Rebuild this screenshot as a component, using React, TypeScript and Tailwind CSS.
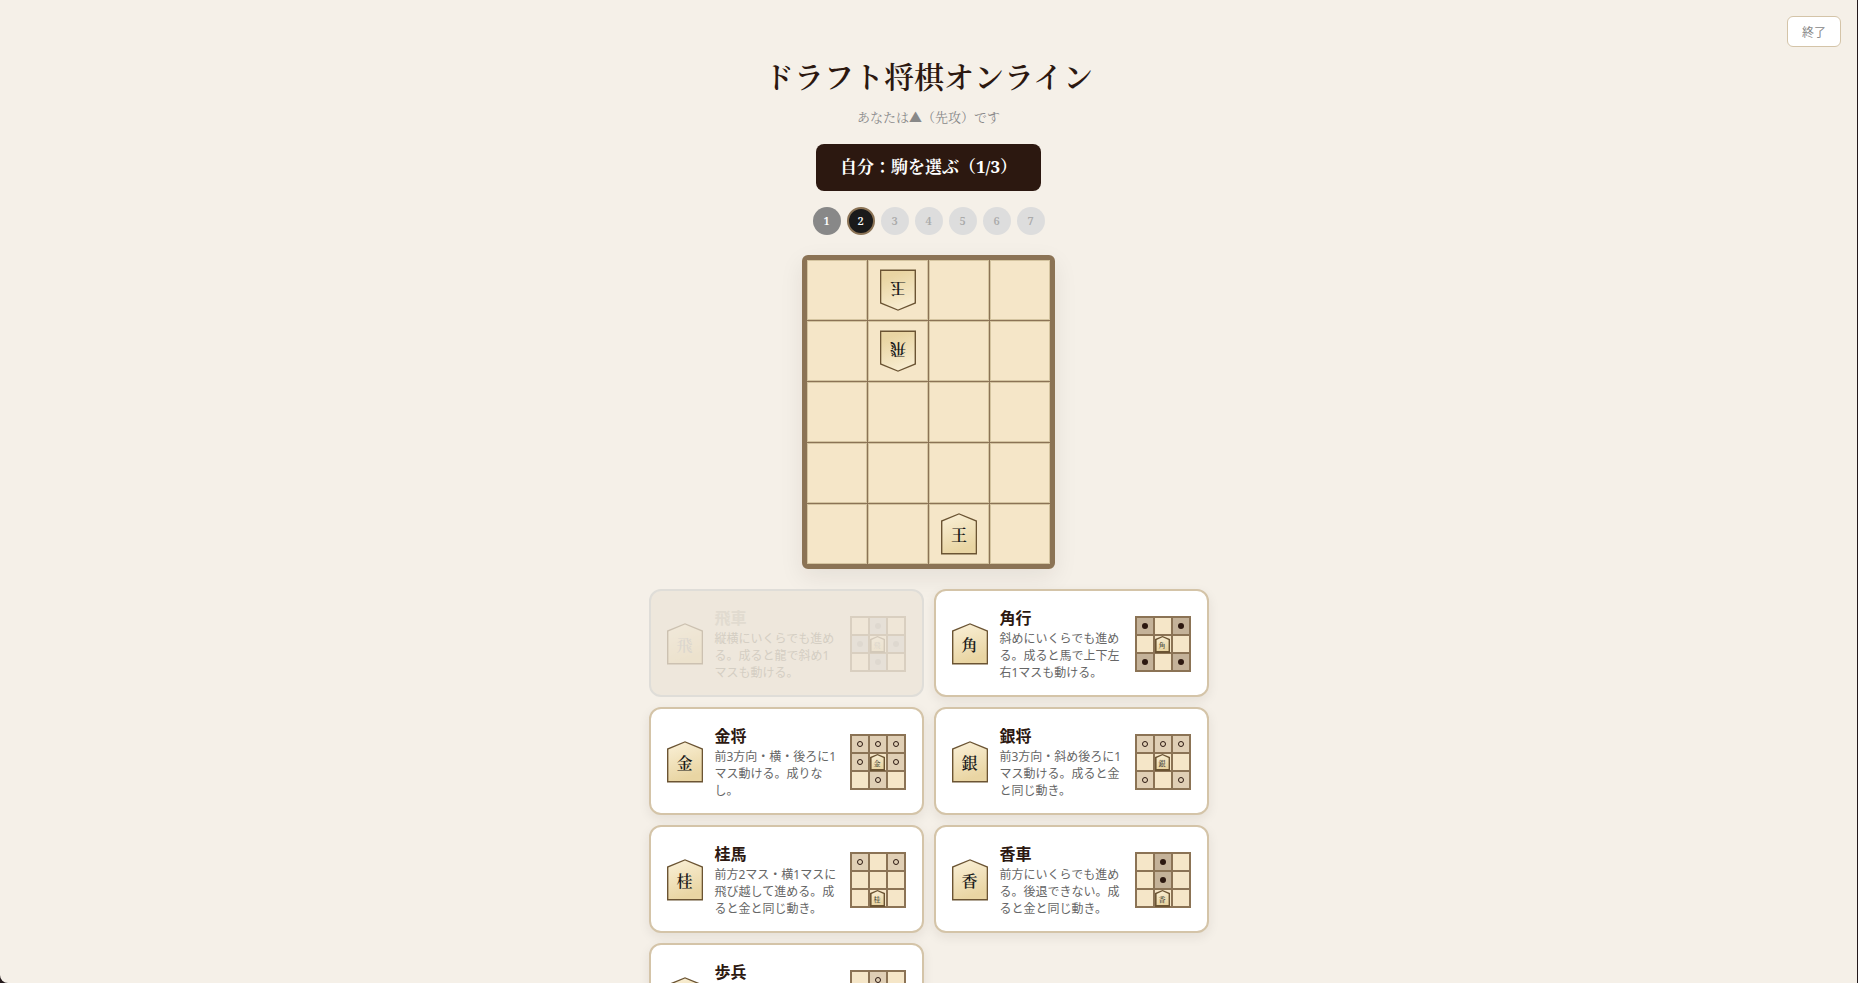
import clsx from "clsx";

type Move = "slide" | "step" | "piece" | null;

type PieceInfo = {
  kanji: string;
  name: string;
  description: string;
  moves: Move[];
  taken?: boolean;
};

const S: Move = "slide";
const O: Move = "step";
const P: Move = "piece";
const _: Move = null;

const pieces: PieceInfo[] = [
  {
    kanji: "飛",
    name: "飛車",
    description: "縦横にいくらでも進める。成ると龍で斜め1マスも動ける。",
    moves: [_, S, _, S, P, S, _, S, _],
    taken: true,
  },
  {
    kanji: "角",
    name: "角行",
    description: "斜めにいくらでも進める。成ると馬で上下左右1マスも動ける。",
    moves: [S, _, S, _, P, _, S, _, S],
  },
  {
    kanji: "金",
    name: "金将",
    description: "前3方向・横・後ろに1マス動ける。成りなし。",
    moves: [O, O, O, O, P, O, _, O, _],
  },
  {
    kanji: "銀",
    name: "銀将",
    description: "前3方向・斜め後ろに1マス動ける。成ると金と同じ動き。",
    moves: [O, O, O, _, P, _, O, _, O],
  },
  {
    kanji: "桂",
    name: "桂馬",
    description: "前方2マス・横1マスに飛び越して進める。成ると金と同じ動き。",
    moves: [O, _, O, _, _, _, _, P, _],
  },
  {
    kanji: "香",
    name: "香車",
    description: "前方にいくらでも進める。後退できない。成ると金と同じ動き。",
    moves: [_, S, _, _, S, _, _, P, _],
  },
  {
    kanji: "歩",
    name: "歩兵",
    description: "前方に1マスだけ進める。成ると金と同じ動き。",
    moves: [_, O, _, _, P, _, _, _, _],
  },
];

const COLS = 4;
const ROWS = 5;

const boardPieces: Record<number, { kanji: string; enemy?: boolean }> = {
  1: { kanji: "玉", enemy: true },
  5: { kanji: "飛", enemy: true },
  18: { kanji: "王" },
};

const steps = [1, 2, 3, 4, 5, 6, 7];
const currentStep = 2;

const serif =
  "font-['Noto_Serif','Noto_Serif_CJK_JP','Liberation_Serif','Noto_Sans_CJK_JP',serif]";
const sans = "font-['Noto_Sans','Noto_Sans_CJK_JP',sans-serif]";

type PieceProps = { kanji: string; enemy?: boolean; taken?: boolean };

const Piece = ({ kanji, enemy, taken }: PieceProps) => (
  <span
    className={clsx(
      "relative flex h-[42px] w-9 shrink-0 items-center justify-center",
      enemy && "rotate-180",
      taken && "opacity-25"
    )}
  >
    <svg viewBox="0 0 36 42" className="absolute inset-0 size-full" aria-hidden="true">
      <defs>
        <linearGradient id="wood" x1="0" y1="0" x2="0.3" y2="1">
          <stop offset="0" stopColor="#faf0d7" />
          <stop offset="1" stopColor="#e9d5a3" />
        </linearGradient>
      </defs>
      <polygon points="18,0.3 36,7.6 36,41.5 0,41.5 0,7.6" fill="#6b5433" />
      <polygon points="18,1.6 34.7,8.4 34.7,40 1.4,40 1.4,8.4" fill="url(#wood)" />
    </svg>
    <span
      className={clsx(
        "relative pt-0.5 text-base leading-5 font-semibold",
        taken ? "text-[#a8a8a8]" : "text-[#1a1a1a]",
        serif
      )}
    >
      {kanji}
    </span>
  </span>
);

const MiniPiece = ({ kanji, taken }: PieceProps) => (
  <span className="relative flex h-[17px] w-[15px] shrink-0 items-center justify-center self-start">
    <svg viewBox="0 0 15 17" className="absolute inset-0 size-full" aria-hidden="true">
      <polygon points="7.5,0 15,3 15,17 0,17 0,3" fill="#6b5433" />
      <polygon points="7.5,1.3 13.6,3.9 13.6,15 1.6,15 1.6,3.9" fill="url(#wood)" />
    </svg>
    <span
      className={clsx(
        "relative pt-0.5 text-[7px] leading-2",
        taken ? "text-[#888888]" : "text-[#1a1a1a]",
        serif
      )}
    >
      {kanji}
    </span>
  </span>
);

const MoveGrid = ({ kanji, moves, taken }: PieceProps & { moves: Move[] }) => (
  <span
    className={clsx(
      "grid shrink-0 grid-cols-3 gap-0.5 border-2 border-[#8b7355] bg-[#8b7355]",
      taken && "opacity-20"
    )}
  >
    {moves.map((move, i) => (
      <span
        key={i}
        className={clsx(
          "flex size-4 items-center",
          move === "slide" && "justify-center",
          move === "slide" && (taken ? "bg-[#c8c8c8]" : "bg-[#c4b299]"),
          move === "step" && "justify-center bg-[#e0cfb5]",
          (move === "piece" || !move) && "bg-[#f5e6c8]"
        )}
      >
        {move === "slide" && (
          <span
            className={clsx("size-1.5 rounded-full", taken ? "bg-[#a0a0a0]" : "bg-[#2c1810]")}
          />
        )}
        {move === "step" && <span className="size-1.5 rounded-full border border-[#2c1810]" />}
        {move === "piece" && <MiniPiece kanji={kanji} taken={taken} />}
      </span>
    ))}
  </span>
);

const PieceCard = ({ piece }: { piece: PieceInfo }) => (
  <button
    type="button"
    disabled={piece.taken}
    className={clsx(
      "flex items-center gap-3 rounded-xl border-2 px-4 pt-4 pb-3.5 text-left",
      piece.taken
        ? "border-[#dfddd8] bg-[#eee7dc]"
        : "cursor-pointer border-[#d4c4a8] bg-white shadow-[0_4px_12px_rgba(44,24,16,0.08)]"
    )}
  >
    <Piece kanji={piece.kanji} taken={piece.taken} />
    <span className={clsx("flex min-w-0 flex-1 flex-col", sans)}>
      <span
        className={clsx(
          "text-base leading-[23px] font-bold",
          piece.taken ? "text-[#e1dbd0]" : "text-[#2c1810]"
        )}
      >
        {piece.name}
      </span>
      <span
        className={clsx(
          "text-xs leading-[17px]",
          piece.taken ? "text-[#d4cec3]" : "text-[#666666]"
        )}
      >
        {piece.description}
      </span>
    </span>
    <MoveGrid kanji={piece.kanji} moves={piece.moves} taken={piece.taken} />
  </button>
);

const Board = () => (
  <div className="grid grid-cols-4 gap-px rounded-md border-[5px] border-[#8b7355] bg-[#8b7355] shadow-[0_8px_24px_rgba(44,24,16,0.08)]">
    {Array.from({ length: COLS * ROWS }, (_cell, i) => (
      <div
        key={i}
        className="flex size-15 items-center justify-center border border-[#d4c4a0] bg-[#f5e6c8]"
      >
        {boardPieces[i] && <Piece {...boardPieces[i]} />}
      </div>
    ))}
  </div>
);

export default function App() {
  return (
    <div className="h-screen bg-[#241a1c] pr-px">
      <div
        lang="ja"
        className="relative h-full overflow-y-auto rounded-bl-lg bg-[#f5f0e8] [scrollbar-width:none]"
      >
        <button
          type="button"
          className={clsx(
            "absolute top-4 right-4 cursor-pointer rounded-md border border-[#d4c4a8] bg-white px-3.5 pt-[7px] pb-[5px] text-xs leading-[17px] text-[#888888]",
            sans
          )}
        >
          終了
        </button>
        <main className="mx-auto flex max-w-[560px] flex-col items-center pt-14 pb-10">
          <h1 className={clsx("text-3xl leading-[42px] font-semibold text-[#2c1810]", serif)}>
            ドラフト将棋オンライン
          </h1>
          <p className={clsx("mt-[9px] text-[13px] leading-5 text-[#888888]", serif)}>
            あなたは▲（先攻）です
          </p>
          <div
            className={clsx(
              "mt-[17px] rounded-lg bg-[#2c1810] px-6 pt-[11px] pb-[13px] text-[17px] leading-[23px] font-bold text-white",
              serif
            )}
          >
            自分：駒を選ぶ（1/3）
          </div>
          <ol className={clsx("mt-4 flex gap-1.5 text-[11px] font-semibold", serif)}>
            {steps.map((step) => (
              <li
                key={step}
                className={clsx(
                  "flex size-7 items-center justify-center rounded-full",
                  step < currentStep && "bg-[#888888] text-white",
                  step === currentStep && "border-2 border-[#8b7355] bg-[#1a1a1a] text-white",
                  step > currentStep && "bg-[#dddddd] text-[#aaaaaa]"
                )}
              >
                {step}
              </li>
            ))}
          </ol>
          <div className="mt-5">
            <Board />
          </div>
          <div className="mt-5 grid w-full grid-cols-2 gap-2.5">
            {pieces.map((piece) => (
              <PieceCard key={piece.name} piece={piece} />
            ))}
          </div>
        </main>
      </div>
    </div>
  );
}
